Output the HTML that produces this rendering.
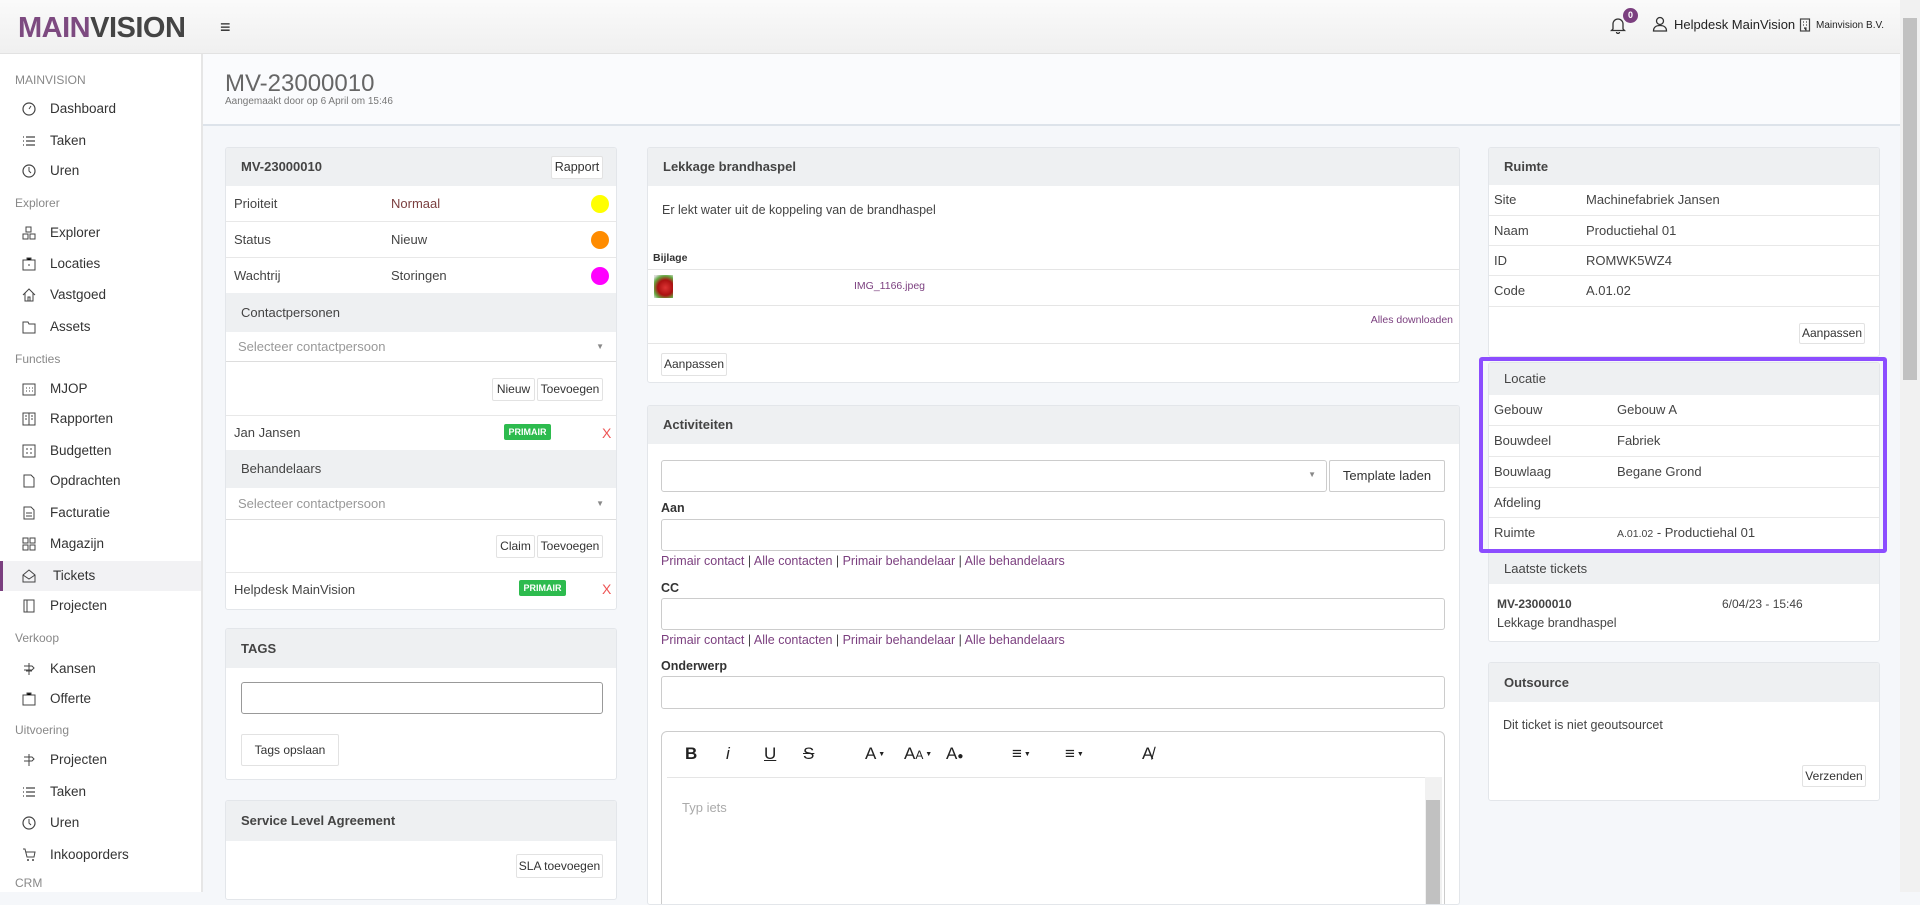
<!DOCTYPE html>
<html><head><meta charset="utf-8"><style>
*{box-sizing:border-box;margin:0;padding:0}
body{width:1920px;height:892px;overflow:hidden;background:#f5f7fa;font-family:"Liberation Sans",sans-serif;font-size:13px;color:#444;position:relative}
.a{position:absolute}
.top{left:0;top:0;width:1900px;height:54px;background:linear-gradient(#fafafa,#f0f0f0);border-bottom:1px solid #e2e2e2}
.logo{left:18px;top:12px;font-size:29px;font-weight:bold;letter-spacing:-0.5px}
.side{left:0;top:54px;width:203px;height:838px;background:#fff;border-right:2px solid #e6e6e6}
.sec{position:absolute;left:15px;font-size:12px;color:#888}
.it{position:absolute;left:0;width:201px;height:30px;line-height:30px;padding-left:50px;font-size:13.5px;color:#333}
.it svg{position:absolute;left:22px;top:8px}
.it.act{background:#f2f2f4;border-left:3px solid #7b3f7f}
.ph{left:203px;top:54px;width:1697px;height:72px;background:#fafbfd;border-bottom:2px solid #dde3ea}
.card{position:absolute;background:#fff;border:1px solid #e3e6ea;border-radius:3px;overflow:hidden}
.hd{position:absolute;left:0;right:0;top:0;background:#eef0f2;font-weight:bold;font-size:13px;color:#444;padding-left:15px}
.row{position:absolute;left:0;right:0;border-bottom:1px solid #e8e8e8;padding-left:8px;font-size:13px;color:#444}
.btn{position:absolute;background:#fff;border:1px solid #e2e2e2;border-radius:2px;font-size:12px;color:#333;text-align:center}
.dot{position:absolute;width:18px;height:18px;border-radius:50%}
.badge{position:absolute;background:#2dbb4e;color:#fff;font-size:9px;font-weight:bold;text-align:center;height:16px;line-height:16px;border-radius:2px}
.inp{position:absolute;background:#fff;border:1px solid #ccc;border-radius:3px}
.lnk{position:absolute;color:#7b3f7f;font-size:12.5px}
.lnk span{color:#444}
.lbl{position:absolute;font-weight:bold;font-size:12.5px;color:#333}
.tb{position:absolute;top:12px;font-size:17px;color:#222;white-space:nowrap}
.tb small{font-size:7px;vertical-align:middle}
</style></head><body>
<div class="a top"></div>
<div class="a logo"><span style="color:#7d4a80">MAIN</span><span style="color:#444">VISION</span></div>
<div class="a" style="left:220px;top:17px;font-size:18px;color:#222">&#8801;</div>
<svg class="a" style="left:1610px;top:17px" width="16" height="17" viewBox="0 0 16 17"><path d="M3 12V7a5 5 0 0110 0v5l1.5 1.5h-13zM6.5 15a1.5 1.5 0 003 0" fill="none" stroke="#333" stroke-width="1.3"/></svg>
<div class="a" style="left:1623px;top:8px;width:15px;height:15px;border-radius:50%;background:#7b3f7f;color:#fff;font-size:9px;font-weight:bold;text-align:center;line-height:15px">0</div>
<svg class="a" style="left:1652px;top:16px" width="16" height="16" viewBox="0 0 16 16"><circle cx="8" cy="5" r="3.5" fill="none" stroke="#333" stroke-width="1.3"/><path d="M1.5 15c0-4 3-5.5 6.5-5.5s6.5 1.5 6.5 5.5z" fill="none" stroke="#333" stroke-width="1.3"/></svg>
<div class="a" style="left:1674px;top:17px;font-size:13px;color:#222">Helpdesk MainVision</div>
<svg class="a" style="left:1799px;top:18px" width="12" height="14" viewBox="0 0 12 14"><rect x="1.5" y="1" width="9" height="12" fill="none" stroke="#444" stroke-width="1.2"/><path d="M4 4h1M7 4h1M4 7h1M7 7h1M5 10h2v3" stroke="#444" stroke-width="1.2"/></svg>
<div class="a" style="left:1816px;top:20px;font-size:10px;color:#222">Mainvision B.V.</div>
<div class="a" style="left:1900px;top:0;width:20px;height:892px;background:#f1f1f1"></div>
<div class="a" style="left:1903px;top:18px;width:14px;height:362px;background:#c1c1c1"></div>

<div class="a side">
<div class="sec" style="top:19px">MAINVISION</div>
<div class="it" style="top:40px"><svg width="14" height="14"><circle cx="7" cy="7" r="6" fill="none" stroke="#444" stroke-width="1.2"/><path d="M7 7l2-3" stroke="#444"/></svg>Dashboard</div>
<div class="it" style="top:72px"><svg width="14" height="14"><path d="M1 3h1M4 3h9M1 7h1M4 7h9M1 11h1M4 11h9" stroke="#444" stroke-width="1.2"/></svg>Taken</div>
<div class="it" style="top:102px"><svg width="14" height="14"><circle cx="7" cy="7" r="6" fill="none" stroke="#444" stroke-width="1.2"/><path d="M7 3v4l2 2" fill="none" stroke="#444"/></svg>Uren</div>
<div class="sec" style="top:142px">Explorer</div>
<div class="it" style="top:164px"><svg width="14" height="14"><rect x="4" y="1" width="5" height="5" fill="none" stroke="#444"/><rect x="1" y="8" width="5" height="5" fill="none" stroke="#444"/><rect x="8" y="8" width="5" height="5" fill="none" stroke="#444"/></svg>Explorer</div>
<div class="it" style="top:195px"><svg width="14" height="14"><rect x="1" y="3" width="12" height="10" fill="none" stroke="#444"/><path d="M5 3V1h4v2M6 8h2" stroke="#444"/></svg>Locaties</div>
<div class="it" style="top:226px"><svg width="14" height="14"><path d="M1 7l6-6 6 6M3 5v8h8V5M6 13V9h2v4" fill="none" stroke="#444"/></svg>Vastgoed</div>
<div class="it" style="top:258px"><svg width="14" height="14"><path d="M1 2h5l1 2h6v9H1z" fill="none" stroke="#444"/></svg>Assets</div>
<div class="sec" style="top:298px">Functies</div>
<div class="it" style="top:320px"><svg width="14" height="14"><rect x="1" y="2" width="12" height="11" fill="none" stroke="#444"/><path d="M4 6h1M7 6h1M10 6h1M4 9h1M7 9h1M10 9h1" stroke="#444"/></svg>MJOP</div>
<div class="it" style="top:350px"><svg width="14" height="14"><rect x="1" y="1" width="12" height="12" fill="none" stroke="#444"/><path d="M7 1v12M3 4h2M3 7h2M9 4h2M9 7h2" stroke="#444"/></svg>Rapporten</div>
<div class="it" style="top:382px"><svg width="14" height="14"><rect x="1" y="1" width="12" height="12" fill="none" stroke="#444"/><path d="M4 5h2M4 9h2M8 5h2M8 9h2" stroke="#444"/></svg>Budgetten</div>
<div class="it" style="top:412px"><svg width="14" height="14"><path d="M2 1h7l3 3v9H2z" fill="none" stroke="#444"/></svg>Opdrachten</div>
<div class="it" style="top:444px"><svg width="14" height="14"><path d="M2 1h7l3 3v9H2zM4 7h6M4 10h6" fill="none" stroke="#444"/></svg>Facturatie</div>
<div class="it" style="top:475px"><svg width="14" height="14"><rect x="1" y="1" width="5" height="5" fill="none" stroke="#444"/><rect x="8" y="1" width="5" height="5" fill="none" stroke="#444"/><rect x="1" y="8" width="5" height="5" fill="none" stroke="#444"/><rect x="8" y="8" width="5" height="5" fill="none" stroke="#444"/></svg>Magazijn</div>
<div class="it act" style="top:507px"><svg width="14" height="14" style="left:19px"><path d="M1 6l6-5 6 5v7H1zM1 6l6 4 6-4" fill="none" stroke="#444"/></svg>Tickets</div>
<div class="it" style="top:537px"><svg width="14" height="14"><rect x="2" y="1" width="10" height="12" fill="none" stroke="#444"/><path d="M5 1v12" stroke="#444"/></svg>Projecten</div>
<div class="sec" style="top:577px">Verkoop</div>
<div class="it" style="top:600px"><svg width="14" height="14"><path d="M7 1v12M2 4h8l2 2-2 2H2M4 9h6" fill="none" stroke="#444"/></svg>Kansen</div>
<div class="it" style="top:630px"><svg width="14" height="14"><rect x="1" y="3" width="12" height="10" fill="none" stroke="#444"/><path d="M5 3V1h4v2" stroke="#444"/></svg>Offerte</div>
<div class="sec" style="top:669px">Uitvoering</div>
<div class="it" style="top:691px"><svg width="14" height="14"><path d="M7 1v12M2 4h8l2 2-2 2H2" fill="none" stroke="#444"/></svg>Projecten</div>
<div class="it" style="top:723px"><svg width="14" height="14"><path d="M1 3h1M4 3h9M1 7h1M4 7h9M1 11h1M4 11h9" stroke="#444" stroke-width="1.2"/></svg>Taken</div>
<div class="it" style="top:754px"><svg width="14" height="14"><circle cx="7" cy="7" r="6" fill="none" stroke="#444" stroke-width="1.2"/><path d="M7 3v4l2 2" fill="none" stroke="#444"/></svg>Uren</div>
<div class="it" style="top:786px"><svg width="14" height="14"><path d="M1 1h2l2 8h7l1-5H4" fill="none" stroke="#444"/><circle cx="6" cy="12" r="1" fill="#444"/><circle cx="11" cy="12" r="1" fill="#444"/></svg>Inkooporders</div>
<div class="sec" style="top:822px">CRM</div>
</div>

<div class="a ph"></div>
<div class="a" style="left:225px;top:70px;font-size:24px;color:#666">MV-23000010</div>
<div class="a" style="left:225px;top:96px;font-size:10px;color:#777">Aangemaakt door op 6 April om 15:46</div>

<!-- Col 1 -->
<div class="card" style="left:225px;top:147px;width:392px;height:463px">
<div class="hd" style="height:38px;line-height:38px">MV-23000010</div>
<div class="btn" style="left:325px;top:8px;width:52px;height:23px;line-height:21px;font-size:12.5px">Rapport</div>
<div class="row" style="top:38px;height:36px;line-height:35px">Prioiteit<span class="a" style="left:165px;color:#7b3f3f">Normaal</span></div>
<div class="dot" style="left:365px;top:47px;background:#ffff00"></div>
<div class="row" style="top:74px;height:36px;line-height:35px">Status<span class="a" style="left:165px">Nieuw</span></div>
<div class="dot" style="left:365px;top:83px;background:#ff8c00"></div>
<div class="row" style="top:110px;height:35px;line-height:35px;border:none">Wachtrij<span class="a" style="left:165px">Storingen</span></div>
<div class="dot" style="left:365px;top:119px;background:#ff00ff"></div>
<div class="hd" style="top:145px;height:39px;line-height:39px;font-weight:normal">Contactpersonen</div>
<div class="row" style="top:184px;height:30px;line-height:29px;padding-left:12px;color:#999;border-bottom:1px solid #ddd">Selecteer contactpersoon<span class="a" style="right:12px;font-size:8px;color:#888">&#9660;</span></div>
<div class="btn" style="left:266px;top:230px;width:43px;height:23px;line-height:21px">Nieuw</div>
<div class="btn" style="left:311px;top:230px;width:66px;height:23px;line-height:21px">Toevoegen</div>
<div class="row" style="top:267px;border-top:1px solid #e8e8e8;height:35px;line-height:34px;border-bottom:none">Jan Jansen</div>
<div class="badge" style="left:278px;top:276px;width:47px">PRIMAIR</div>
<div class="a" style="left:376px;top:277px;color:#e55;font-size:14px">X</div>
<div class="hd" style="top:302px;height:38px;line-height:38px;font-weight:normal">Behandelaars</div>
<div class="row" style="top:340px;height:32px;line-height:31px;padding-left:12px;color:#999;border-bottom:1px solid #ddd">Selecteer contactpersoon<span class="a" style="right:12px;font-size:8px;color:#888">&#9660;</span></div>
<div class="btn" style="left:270px;top:387px;width:39px;height:23px;line-height:21px">Claim</div>
<div class="btn" style="left:311px;top:387px;width:66px;height:23px;line-height:21px">Toevoegen</div>
<div class="row" style="top:424px;border-top:1px solid #e8e8e8;height:36px;line-height:34px;border-bottom:none">Helpdesk MainVision</div>
<div class="badge" style="left:293px;top:432px;width:47px">PRIMAIR</div>
<div class="a" style="left:376px;top:433px;color:#e55;font-size:14px">X</div>
</div>

<div class="card" style="left:225px;top:628px;width:392px;height:152px">
<div class="hd" style="height:39px;line-height:39px">TAGS</div>
<div class="inp" style="left:15px;top:53px;width:362px;height:32px;border-color:#999"></div>
<div class="btn" style="left:15px;top:105px;width:98px;height:32px;line-height:30px">Tags opslaan</div>
</div>

<div class="card" style="left:225px;top:800px;width:392px;height:100px">
<div class="hd" style="height:40px;line-height:40px">Service Level Agreement</div>
<div class="btn" style="left:290px;top:53px;width:87px;height:24px;line-height:22px">SLA toevoegen</div>
</div>

<!-- Col 2 -->
<div class="card" style="left:647px;top:147px;width:813px;height:236px">
<div class="hd" style="height:38px;line-height:38px">Lekkage brandhaspel</div>
<div class="a" style="left:14px;top:55px;font-size:12.5px">Er lekt water uit de koppeling van de brandhaspel</div>
<div class="a" style="left:5px;top:104px;font-size:10.5px;font-weight:bold;color:#333">Bijlage</div>
<div class="a" style="left:0;right:0;top:121px;border-top:1px solid #e5e5e5"></div>
<div class="a" style="left:6px;top:127px;width:19px;height:23px;background:radial-gradient(circle at 60% 55%,#d33 0,#a11 45%,#6a4 70%,#ddd 90%)"></div>
<div class="a" style="left:206px;top:132px;font-size:10.5px;color:#7b3f7f">IMG_1166.jpeg</div>
<div class="a" style="left:0;right:0;top:157px;border-top:1px solid #e5e5e5"></div>
<div class="a" style="right:6px;top:166px;font-size:10.5px;color:#7b3f7f">Alles downloaden</div>
<div class="a" style="left:0;right:0;top:195px;border-top:1px solid #e5e5e5"></div>
<div class="btn" style="left:13px;top:205px;width:66px;height:23px;line-height:21px">Aanpassen</div>
</div>

<div class="card" style="left:647px;top:405px;width:813px;height:500px">
<div class="hd" style="height:38px;line-height:38px">Activiteiten</div>
<div class="inp" style="left:13px;top:54px;width:666px;height:32px"><span class="a" style="right:10px;top:9px;font-size:8px;color:#888">&#9660;</span></div>
<div class="btn" style="left:681px;top:54px;width:116px;height:32px;line-height:30px;font-size:13px;border-color:#ccc">Template laden</div>
<div class="lbl" style="left:13px;top:95px">Aan</div>
<div class="inp" style="left:13px;top:113px;width:784px;height:32px"></div>
<div class="lnk" style="left:13px;top:148px">Primair contact <span>|</span> Alle contacten <span>|</span> Primair behandelaar <span>|</span> Alle behandelaars</div>
<div class="lbl" style="left:13px;top:175px">CC</div>
<div class="inp" style="left:13px;top:192px;width:784px;height:32px"></div>
<div class="lnk" style="left:13px;top:227px">Primair contact <span>|</span> Alle contacten <span>|</span> Primair behandelaar <span>|</span> Alle behandelaars</div>
<div class="lbl" style="left:13px;top:253px">Onderwerp</div>
<div class="inp" style="left:13px;top:270px;width:784px;height:33px"></div>
<div class="inp" style="left:13px;top:325px;width:784px;height:200px;border-radius:6px;border-color:#ccc">
<div class="a" style="left:5px;right:5px;top:45px;border-top:1px solid #e5e5e5"></div>
<div class="tb" style="left:23px"><b>B</b></div>
<div class="tb" style="left:64px"><i>i</i></div>
<div class="tb" style="left:102px"><u>U</u></div>
<div class="tb" style="left:141px"><s>S</s></div>
<div class="tb" style="left:203px">A<small> &#9660;</small></div>
<div class="tb" style="left:242px">A<span style="font-size:12px">A</span><small> &#9660;</small></div>
<div class="tb" style="left:284px">A<span style="font-size:10px">&#9679;</span></div>
<div class="tb" style="left:350px">&#8801;<small> &#9660;</small></div>
<div class="tb" style="left:403px">&#8801;<small> &#9660;</small></div>
<div class="tb" style="left:480px">A&#824;</div>
<div class="a" style="left:20px;top:68px;font-size:13px;color:#aaa">Typ iets</div>
<div class="a" style="right:2px;top:45px;width:17px;height:160px;background:#f1f1f1"></div>
<div class="a" style="right:4px;top:68px;width:14px;height:140px;background:#c1c1c1"></div>
</div>
</div>

<!-- Col 3 -->
<div class="card" style="left:1488px;top:147px;width:392px;height:210px">
<div class="hd" style="height:37px;line-height:37px">Ruimte</div>
<div class="row" style="top:37px;height:31px;line-height:30px;padding-left:5px">Site<span class="a" style="left:97px">Machinefabriek Jansen</span></div>
<div class="row" style="top:68px;height:30px;line-height:29px;padding-left:5px">Naam<span class="a" style="left:97px">Productiehal 01</span></div>
<div class="row" style="top:98px;height:30px;line-height:29px;padding-left:5px">ID<span class="a" style="left:97px">ROMWK5WZ4</span></div>
<div class="row" style="top:128px;height:31px;line-height:30px;padding-left:5px">Code<span class="a" style="left:97px">A.01.02</span></div>
<div class="btn" style="left:310px;top:175px;width:66px;height:21px;line-height:19px">Aanpassen</div>
</div>

<div class="card" style="left:1488px;top:362px;width:392px;height:280px">
<div class="hd" style="height:32px;line-height:32px;font-weight:normal">Locatie</div>
<div class="row" style="top:32px;height:31px;line-height:30px;padding-left:5px">Gebouw<span class="a" style="left:128px">Gebouw A</span></div>
<div class="row" style="top:63px;height:31px;line-height:30px;padding-left:5px">Bouwdeel<span class="a" style="left:128px">Fabriek</span></div>
<div class="row" style="top:94px;height:31px;line-height:30px;padding-left:5px">Bouwlaag<span class="a" style="left:128px">Begane Grond</span></div>
<div class="row" style="top:125px;height:30px;line-height:29px;padding-left:5px">Afdeling</div>
<div class="row" style="top:155px;height:31px;line-height:30px;padding-left:5px;border:none">Ruimte<span class="a" style="left:128px"><small style="font-size:10.5px">A.01.02</small> - Productiehal 01</span></div>
<div class="hd" style="top:190px;height:31px;line-height:31px;font-weight:normal">Laatste tickets</div>
<div class="a" style="left:8px;top:234px;font-weight:bold;font-size:12px">MV-23000010</div>
<div class="a" style="left:233px;top:234px;font-size:12px">6/04/23 - 15:46</div>
<div class="a" style="left:8px;top:253px;font-size:12.5px">Lekkage brandhaspel</div>
</div>
<div class="a" style="left:1479px;top:357px;width:408px;height:196px;border:4px solid #8c4dff;border-radius:3px"></div>

<div class="card" style="left:1488px;top:662px;width:392px;height:139px">
<div class="hd" style="height:39px;line-height:39px">Outsource</div>
<div class="a" style="left:14px;top:55px;font-size:12.5px">Dit ticket is niet geoutsourcet</div>
<div class="btn" style="left:313px;top:102px;width:64px;height:22px;line-height:20px">Verzenden</div>
</div>
</body></html>
